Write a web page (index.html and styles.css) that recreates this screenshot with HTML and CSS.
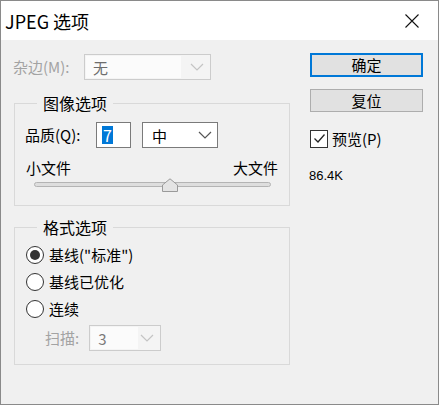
FILE: index.html
```html
<!DOCTYPE html>
<html>
<head>
    <title>JPEG 选项</title>
    <link rel="stylesheet" href="styles.css">
</head>
<body>
    <div class="dialog">
        <!-- Barra de título -->
        <div class="titlebar">
            <span class="title">JPEG 选项</span>
            <svg class="close" width="14" height="14" viewBox="0 0 14 14">
                <path d="M0.5 0.5 L13.5 13.5 M13.5 0.5 L0.5 13.5" stroke="#111" stroke-width="1.1" fill="none"/>
            </svg>
        </div>

        <div class="content">
            <div class="left">
                <div class="row matte">
                    <span class="label disabled">杂边(M):</span>
                    <div class="select select-disabled matte-select">
                        <span class="value">无</span>
                        <svg class="chev" width="14" height="8" viewBox="0 0 14 8"><path d="M1 1 L7 7 L13 1" stroke="#c4c4c4" stroke-width="1.2" fill="none"/></svg>
                    </div>
                </div>

                <fieldset class="group image-group">
                    <legend>图像选项</legend>
                    <div class="row quality">
                        <span class="label">品质(Q):</span>
                        <div class="input"><span class="sel">7</span></div>
                        <div class="select quality-select">
                            <span class="value">中</span>
                            <svg class="chev" width="14" height="8" viewBox="0 0 14 8"><path d="M1 1 L7 7 L13 1" stroke="#555" stroke-width="1.2" fill="none"/></svg>
                        </div>
                    </div>
                    <div class="sizes">
                        <span>小文件</span>
                        <span>大文件</span>
                    </div>
                    <div class="slider">
                        <div class="track"></div>
                        <svg class="thumb" width="16" height="14" viewBox="0 0 16 14">
                            <path d="M0.5 13.5 L0.5 7 L8 0.8 L15.5 7 L15.5 13.5 Z" fill="#e4e4e4" stroke="#9a9a9a" stroke-width="1"/>
                        </svg>
                    </div>
                </fieldset>

                <fieldset class="group format-group">
                    <legend>格式选项</legend>
                    <div class="radio-row">
                        <span class="radio checked"></span>
                        <span>基线("标准")</span>
                    </div>
                    <div class="radio-row">
                        <span class="radio"></span>
                        <span>基线已优化</span>
                    </div>
                    <div class="radio-row">
                        <span class="radio"></span>
                        <span>连续</span>
                    </div>
                    <div class="row scan">
                        <span class="label disabled">扫描:</span>
                        <div class="select select-disabled scan-select">
                            <span class="value">3</span>
                            <svg class="chev" width="14" height="8" viewBox="0 0 14 8"><path d="M1 1 L7 7 L13 1" stroke="#c4c4c4" stroke-width="1.2" fill="none"/></svg>
                        </div>
                    </div>
                </fieldset>
            </div>

            <div class="right">
                <button class="btn default">确定</button>
                <button class="btn">复位</button>
                <div class="check-row">
                    <span class="checkbox">
                        <svg width="15" height="15" viewBox="0 0 15 15"><path d="M2.5 7.5 L6 11 L12.5 3.5" stroke="#222" stroke-width="1.3" fill="none"/></svg>
                    </span>
                    <span>预览(P)</span>
                </div>
                <div class="filesize">86.4K</div>
            </div>
        </div>
    </div>
</body>
</html>
```

FILE: styles.css
```css
body {
    margin: 0;
    padding: 0;
    font-family: "Noto Sans CJK SC", "Noto Sans", sans-serif;
    color: #000;
}
.dialog {
    width: 439px;
    height: 405px;
    box-sizing: border-box;
    border: 1px solid #8a8a8a;
    background: #f0f0f0;
    display: flex;
    flex-direction: column;
}
.titlebar {
    height: 39px;
    background: #fff;
    display: flex;
    align-items: center;
    justify-content: space-between;
    padding: 0 19px 0 4px;
}
.title {
    font-size: 18px;
    line-height: 22px;
    margin-top: 1px;
}
.close {
    margin-top: 1px;
}
.content {
    display: flex;
    padding: 14px 0 0 12px;
}
.left {
    width: 277px;
}
.row {
    display: flex;
    align-items: center;
}
.label {
    font-size: 15px;
    line-height: 20px;
}
.matte .label,
.quality .label {
    width: 71px;
}
.disabled {
    color: #a3a3a3;
}
.select {
    box-sizing: border-box;
    height: 26px;
    border: 1px solid #7a7a7a;
    background: #fff;
    display: flex;
    align-items: center;
    justify-content: space-between;
    font-size: 15px;
    padding: 0 5px 0 9px;
}
.select-disabled {
    border-color: #cccccc;
    background: #f4f4f4;
    padding: 1px 6px 1px 1px;
    color: #6d6d6d;
}
.select-disabled .value {
    background: #fbfbfb;
    align-self: stretch;
    display: flex;
    align-items: center;
    padding-left: 7px;
}
.matte-select {
    width: 127px;
}
.matte-select .value {
    width: 88px;
}
.group {
    margin: 13px 0 0 1px;
    padding: 0 10px 13px 10px;
    border: 1px solid #d9d9d9;
}
.group legend {
    font-size: 16px;
    line-height: 20px;
    padding: 0 6px;
    margin-left: 12px;
}
.quality {
    margin-top: 9px;
}
.input {
    box-sizing: border-box;
    width: 35px;
    height: 26px;
    border: 1px solid #7a7a7a;
    background: #fff;
    display: flex;
    align-items: center;
    padding-left: 5px;
}
.sel {
    background: #0078d7;
    color: #fff;
    font-size: 16px;
    line-height: 18px;
    padding: 0 1px;
}
.quality-select {
    width: 76px;
    margin-left: 11px;
}
.sizes {
    display: flex;
    justify-content: space-between;
    font-size: 15px;
    line-height: 20px;
    margin-top: 10px;
    padding: 0 1px;
}
.slider {
    position: relative;
    height: 14px;
    margin: 0 8px 0 9px;
}
.track {
    position: absolute;
    left: 0;
    right: 0;
    top: 4px;
    height: 5px;
    border-radius: 3px;
    border: 1px solid #b4b4b4;
    background: #dedede;
    box-sizing: border-box;
}
.thumb {
    position: absolute;
    left: 128px;
    top: 0;
}
.format-group {
    margin-top: 11px;
    padding-bottom: 13px;
}
.radio-row {
    display: flex;
    align-items: center;
    height: 27px;
    font-size: 15px;
}
.radio-row:first-of-type {
    margin-top: 4px;
}
.radio {
    box-sizing: border-box;
    width: 18px;
    height: 18px;
    border-radius: 50%;
    border: 1px solid #333;
    background: #fff;
    margin: 0 5px 0 1px;
    display: flex;
    align-items: center;
    justify-content: center;
}
.radio.checked::after {
    content: "";
    width: 10px;
    height: 10px;
    border-radius: 50%;
    background: #333;
}
.scan {
    margin-top: 3px;
    padding-left: 20px;
}
.scan-select {
    width: 72px;
    margin-left: 10px;
}
.scan-select .value {
    width: 40px;
    color: #7a7a7a;
}
.right {
    margin-left: 20px;
    width: 113px;
    display: flex;
    flex-direction: column;
}
.btn {
    box-sizing: border-box;
    width: 113px;
    height: 23px;
    border: 1px solid #adadad;
    background: #e1e1e1;
    font-family: inherit;
    font-size: 15px;
    line-height: 20px;
    padding: 0;
    color: #000;
}
.btn.default {
    margin-top: -1px;
    border: 2px solid #0078d7;
    height: 24px;
}
.btn + .btn {
    margin-top: 12px;
}
.check-row {
    display: flex;
    align-items: center;
    margin-top: 16px;
    font-size: 15px;
}
.checkbox {
    box-sizing: border-box;
    width: 18px;
    height: 18px;
    border: 1px solid #333;
    background: #fff;
    display: flex;
    align-items: center;
    justify-content: center;
    margin-right: 4px;
}
.filesize {
    font-family: "Liberation Sans", sans-serif;
    font-size: 13px;
    margin-top: 19px;
    margin-left: -1px;
}
```
